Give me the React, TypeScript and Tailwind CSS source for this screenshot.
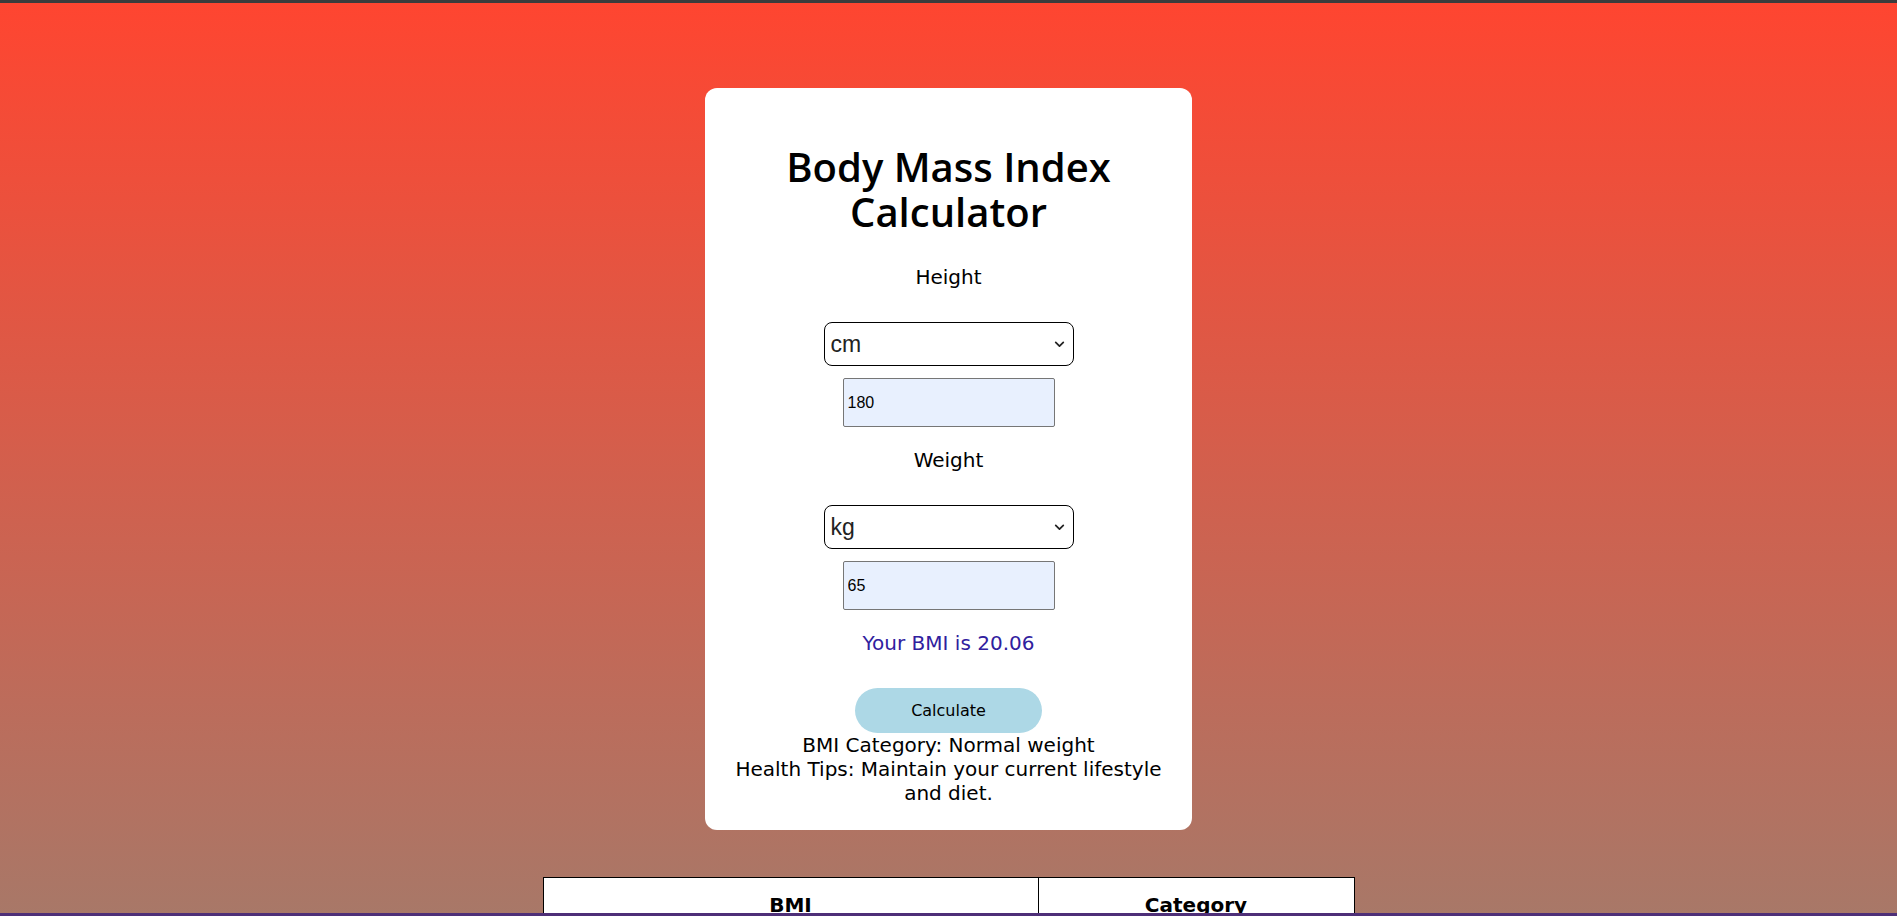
import React from "react";

const font = { fontFamily: '"DejaVu Sans", sans-serif' };

const Chevron: React.FC = () => (
  <svg className="pointer-events-none absolute right-[8px] top-1/2 -translate-y-1/2" width="13" height="13" viewBox="0 0 12 12" fill="none">
    <path d="M2.5 4.5 L6 8 L9.5 4.5" stroke="#222" strokeWidth="1.6" strokeLinecap="round" strokeLinejoin="round" />
  </svg>
);

const UnitSelect: React.FC<{ value: string; options: string[] }> = ({ value, options }) => (
  <div className="relative w-[250px]">
    <select
      defaultValue={value}
      className="h-[44px] w-full appearance-none rounded-[8px] border border-black bg-white pl-[6px] text-[23px] text-[#222] font-['Liberation_Sans',Arial,sans-serif]"
    >
      {options.map((o) => (
        <option key={o}>{o}</option>
      ))}
    </select>
    <Chevron />
  </div>
);

const NumberInput: React.FC<{ value: string }> = ({ value }) => (
  <input
    type="text"
    defaultValue={value}
    className="h-[49px] w-[212px] rounded-[2px] border border-[#767676] bg-[#e8f0fe] pl-[4px] text-[16px] text-black font-['Liberation_Sans',Arial,sans-serif]"
  />
);

const rows = [
  ["Below 18.5", "Underweight"],
  ["18.5 - 24.9", "Normal weight"],
  ["25 - 29.9", "Overweight"],
  ["30 and above", "Obese"],
];

const App: React.FC = () => {
  return (
    <div
      className="min-h-screen bg-[linear-gradient(180deg,#ff4530_0px,#a87868_916px,#a87868_100%)] pb-16 text-black"
      style={font}
    >
      <div className="h-[3px] bg-[#3c3c3c]" />
      <div className="flex flex-col items-center pt-[85px]">
        {/* card */}
        <div className="flex w-[487px] flex-col items-center rounded-[12px] bg-white px-[28px] pt-[56px] pb-[25px]">
          <h1 className="text-center text-[40px] font-semibold leading-[45px] font-['Open_Sans',sans-serif]">
            Body Mass Index
            <br />
            Calculator
          </h1>
          <label className="mt-[31px] text-[20px] leading-[24px]">Height</label>
          <div className="mt-[33px]">
            <UnitSelect value="cm" options={["cm", "m", "ft", "in"]} />
          </div>
          <div className="mt-[12px]">
            <NumberInput value="180" />
          </div>
          <label className="mt-[21px] text-[20px] leading-[24px]">Weight</label>
          <div className="mt-[33px]">
            <UnitSelect value="kg" options={["kg", "lb"]} />
          </div>
          <div className="mt-[12px]">
            <NumberInput value="65" />
          </div>
          <p className="mt-[21px] text-[20px] leading-[24px] text-[#30209e]">Your BMI is 20.06</p>
          <button className="mt-[33px] h-[45px] w-[187px] rounded-full bg-[#add8e6] text-[16px] text-black">
            Calculate
          </button>
          <div className="text-center text-[20px] leading-[24px]">
            <p>BMI Category: Normal weight</p>
            <p className="mx-auto w-[431px]">Health Tips: Maintain your current lifestyle and diet.</p>
          </div>
        </div>

        {/* table */}
        <table className="mt-[47px] w-[812px] border-collapse bg-white">
          <thead>
            <tr>
              <th className="w-[495px] border border-black py-[15px] text-[20px] font-bold leading-[24px]">BMI</th>
              <th className="border border-black py-[15px] text-[20px] font-bold leading-[24px]">Category</th>
            </tr>
          </thead>
          <tbody>
            {rows.map(([a, b]) => (
              <tr key={a}>
                <td className="border border-black py-[15px] text-center text-[20px] leading-[24px]">{a}</td>
                <td className="border border-black py-[15px] text-center text-[20px] leading-[24px]">{b}</td>
              </tr>
            ))}
          </tbody>
        </table>
      </div>
      <div className="fixed inset-x-0 bottom-0 h-[3px] bg-[#4e2f78]" />
    </div>
  );
};

export default App;
